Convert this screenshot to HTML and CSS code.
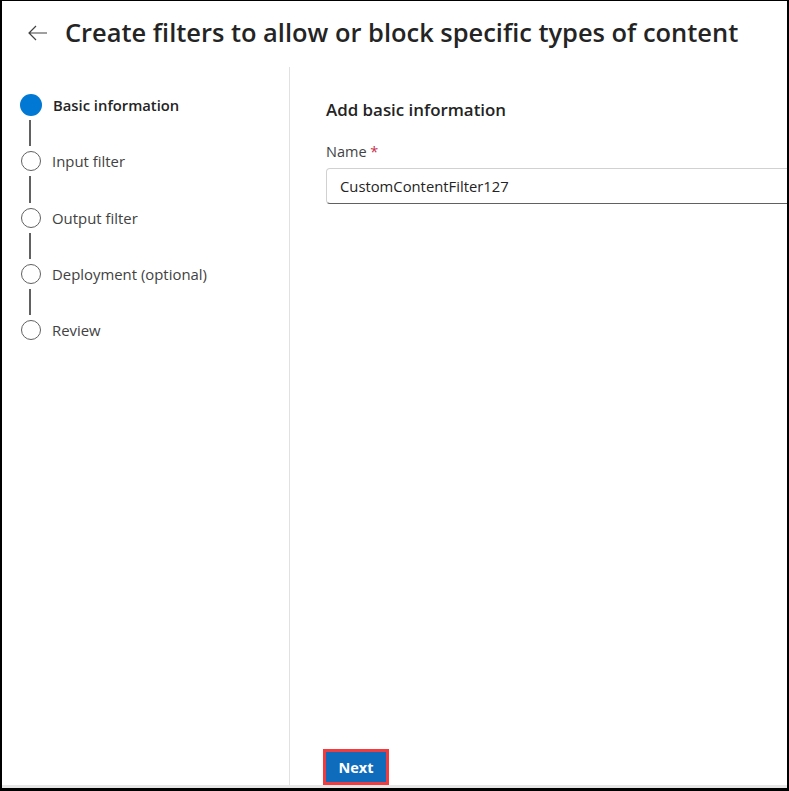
FILE: index.html
```html
<!DOCTYPE html>
<html>
<head>
<meta charset="utf-8">
<link rel="stylesheet" href="styles.css">
</head>
<body>
<div class="frame">
  <header class="header">
    <svg class="back" width="20" height="16" viewBox="0 0 20 16"><path d="M8 1 L1 8 L8 15 M1 8 H19" fill="none" stroke="#424242" stroke-width="1.2"/></svg>
    <h1 class="title">Create filters to allow or block specific types of content</h1>
  </header>
  <div class="main">
    <nav class="sidebar">
      <ol class="steps">
        <li class="step current"><span class="dot"></span><span class="label">Basic information</span></li>
        <li class="connector"><span class="line"></span></li>
        <li class="step"><span class="dot"></span><span class="label">Input filter</span></li>
        <li class="connector"><span class="line"></span></li>
        <li class="step"><span class="dot"></span><span class="label">Output filter</span></li>
        <li class="connector"><span class="line"></span></li>
        <li class="step"><span class="dot"></span><span class="label">Deployment (optional)</span></li>
        <li class="connector"><span class="line"></span></li>
        <li class="step"><span class="dot"></span><span class="label">Review</span></li>
      </ol>
    </nav>
    <section class="content">
      <div class="form">
        <h2 class="section-title">Add basic information</h2>
        <label class="field-label">Name <span class="req">*</span></label>
        <div class="input">CustomContentFilter127</div>
      </div>
      <div class="footer">
        <button class="next">Next</button>
      </div>
    </section>
  </div>
  <div class="band"></div>
</div>
</body>
</html>
```
FILE: styles.css
```css
html, body { margin: 0; padding: 0; background: #fff; }
body { font-family: "Open Sans", "Noto Sans", sans-serif; color: #242424; }
.frame {
  width: 789px; height: 791px; box-sizing: border-box;
  border-left: 2px solid #000; border-right: 2px solid #000;
  border-top: 1px solid #000; border-bottom: 3px solid #000;
  display: flex; flex-direction: column; overflow: hidden;
}
.header { height: 66px; display: flex; align-items: center; flex: none; }
.back { margin-left: 26px; margin-top: -3px; flex: none; }
.title {
  margin: 0 0 0 17px; font-size: 25.45px; font-weight: 600; letter-spacing: 0;
  color: #242424; white-space: nowrap; margin-top: -4px;
}
.main { flex: 1; display: flex; min-height: 0; }
.sidebar { width: 287px; flex: none; border-right: 1px solid #e1e1e1; }
.steps { list-style: none; margin: 0; padding: 27px 0 0 18px; }
.step { height: 22px; display: flex; align-items: center; }
.dot {
  width: 20px; height: 20px; box-sizing: border-box; border: 1px solid #616161;
  border-radius: 50%; margin: 0 1px; flex: none;
}
.step.current .dot { width: 22px; height: 22px; margin: 0; border: none; background: #0078d4; }
.label { margin-left: 10px; font-size: 14.9px; color: #424242; }
.step.current .label { font-weight: 600; margin-left: 11px; color: #242424; font-size: 14.8px; }
.connector { height: 34.3px; display: flex; flex-direction: column; }
.line { width: 2px; flex: 1; margin: 4px 0 4px 9px; background: #616161; }
.content { flex: 1; display: flex; flex-direction: column; padding-left: 36px; min-width: 0; }
.form { flex: 1; }
.section-title { margin: 31px 0 0; font-size: 16.9px; font-weight: 600; line-height: 24px; color: #242424; }
.field-label { display: block; margin-top: 20px; font-size: 14.5px; line-height: 20px; color: #424242; }
.req { color: #c4314b; }
.input {
  margin-top: 6px; width: 600px; height: 36px; box-sizing: border-box;
  border: 1px solid #d1d1d1; border-bottom-color: #616161; border-radius: 4px;
  padding: 0 13px; display: flex; align-items: center; font-size: 14.8px; color: #242424;
}
.footer { flex: none; height: 36px; display: flex; align-items: flex-end; }
.next {
  margin-left: -3px; width: 66px; height: 36px; box-sizing: border-box;
  border: 3px solid #f03b3f; background: #0f6cbd; color: #fff;
  font-family: "Open Sans", sans-serif; font-size: 14.5px; font-weight: 700; padding: 0;
}
.band { height: 3px; background: #e6e6e6; flex: none; }
```
